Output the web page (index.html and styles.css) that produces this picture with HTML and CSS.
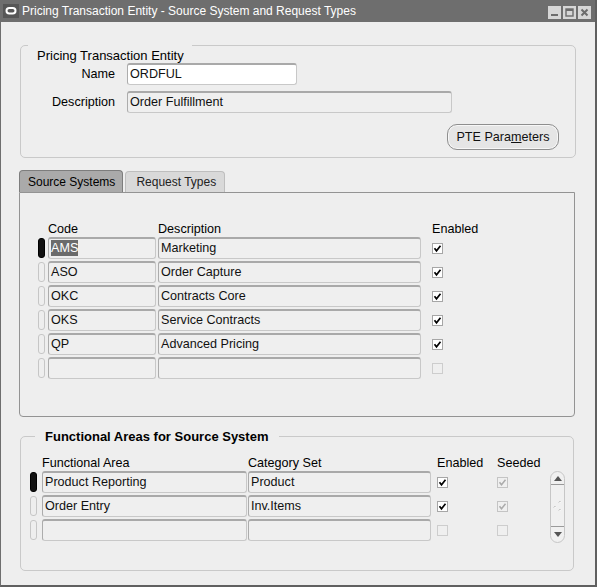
FILE: index.html
```html
<!DOCTYPE html>
<html lang="en">
<head>
  <meta charset="UTF-8">
  <title>Pricing Transaction Entity</title>
  <link rel="stylesheet" href="styles.css">
</head>
<body>

<div class="window">
  <!-- TITLE BAR -->
  <div class="titlebar">
    <svg class="app-icon" width="16" height="14" viewBox="0 0 16 14">
      <rect width="16" height="14" fill="#565656"/>
      <rect x="3.5" y="4" width="9" height="5.5" rx="2.75" fill="none" stroke="#fff" stroke-width="2"/>
    </svg>
    <span class="title">Pricing Transaction Entity - Source System and Request Types</span>
    <div class="winbtns">
      <svg width="13" height="13" viewBox="0 0 13 13">
        <rect width="13" height="13" fill="#d6d6d6"/>
        <rect x="3" y="8" width="7" height="2" fill="#6c6c6c"/>
      </svg>
      <svg width="13" height="13" viewBox="0 0 13 13">
        <rect width="13" height="13" fill="#d6d6d6"/>
        <rect x="3" y="3" width="7" height="7" fill="none" stroke="#6c6c6c" stroke-width="1.4"/>
        <rect x="3" y="3" width="7" height="2" fill="#6c6c6c"/>
      </svg>
      <svg width="13" height="13" viewBox="0 0 13 13">
        <rect width="13" height="13" fill="#d6d6d6"/>
        <path d="M3.5 3.5L9.5 9.5M9.5 3.5L3.5 9.5" stroke="#6c6c6c" stroke-width="2"/>
      </svg>
    </div>
  </div>

  <div class="content">
    <!-- PTE -->
    <div class="group pte">
      <div class="caption">Pricing Transaction Entity</div>
      <div class="form">
        <label>Name</label>
        <div class="field white name">ORDFUL</div>
        <label>Description</label>
        <div class="field desc">Order Fulfillment</div>
      </div>
      <div class="actions">
        <button class="pill">PTE Para<u>m</u>eters</button>
      </div>
    </div>

    <!-- TABS -->
    <div class="tabs">
      <div class="tab selected">Source Systems</div>
      <div class="tab">Request Types</div>
    </div>
    <div class="tabpanel">
      <div class="thead src-cols">
        <span></span><span>Code</span><span>Description</span><span>Enabled</span>
      </div>
      <div class="tbody src-cols">
        <div class="ind cur"></div>
        <div class="field code"><span class="sel">AMS</span></div>
        <div class="field sdesc">Marketing</div>
        <svg class="cb" viewBox="0 0 11 11"><rect x=".5" y=".5" width="10" height="10" fill="#fff" stroke="#a6a6a6"/><path d="M2.5 5.2l2 2.6 4-5" fill="none" stroke="#000" stroke-width="1.7"/></svg>

        <div class="ind"></div>
        <div class="field code">ASO</div>
        <div class="field sdesc">Order Capture</div>
        <svg class="cb" viewBox="0 0 11 11"><rect x=".5" y=".5" width="10" height="10" fill="#fff" stroke="#a6a6a6"/><path d="M2.5 5.2l2 2.6 4-5" fill="none" stroke="#000" stroke-width="1.7"/></svg>

        <div class="ind"></div>
        <div class="field code">OKC</div>
        <div class="field sdesc">Contracts Core</div>
        <svg class="cb" viewBox="0 0 11 11"><rect x=".5" y=".5" width="10" height="10" fill="#fff" stroke="#a6a6a6"/><path d="M2.5 5.2l2 2.6 4-5" fill="none" stroke="#000" stroke-width="1.7"/></svg>

        <div class="ind"></div>
        <div class="field code">OKS</div>
        <div class="field sdesc">Service Contracts</div>
        <svg class="cb" viewBox="0 0 11 11"><rect x=".5" y=".5" width="10" height="10" fill="#fff" stroke="#a6a6a6"/><path d="M2.5 5.2l2 2.6 4-5" fill="none" stroke="#000" stroke-width="1.7"/></svg>

        <div class="ind"></div>
        <div class="field code">QP</div>
        <div class="field sdesc">Advanced Pricing</div>
        <svg class="cb" viewBox="0 0 11 11"><rect x=".5" y=".5" width="10" height="10" fill="#fff" stroke="#a6a6a6"/><path d="M2.5 5.2l2 2.6 4-5" fill="none" stroke="#000" stroke-width="1.7"/></svg>

        <div class="ind"></div>
        <div class="field code"></div>
        <div class="field sdesc"></div>
        <svg class="cb" viewBox="0 0 11 11"><rect x=".5" y=".5" width="10" height="10" fill="#efefef" stroke="#cdcdcd"/></svg>
      </div>
    </div>

    <!-- FUNCTIONAL AREAS -->
    <div class="group func">
      <div class="legend">Functional Areas for Source System</div>
      <div class="thead fa-cols">
        <span></span><span>Functional Area</span><span>Category Set</span><span>Enabled</span><span>Seeded</span>
      </div>
      <div class="tbody fa-cols">
        <div class="vscroll">
          <div class="sc-up"><svg width="8" height="5" viewBox="0 0 8 5"><path d="M0 5L4 0L8 5Z" fill="#555"/></svg></div>
          <div class="sc-mid">
            <svg width="9" height="12" viewBox="0 0 9 12">
              <path d="M6 2.5L7.5 1M1 7.5L2.5 6M6 10.5L7.5 9" stroke="#a0a0a0" stroke-width="1"/>
              <path d="M6.5 3L8 1.5M1.5 8L3 6.5M6.5 11L8 9.5" stroke="#fff" stroke-width="1"/>
            </svg>
          </div>
          <div class="sc-down"><svg width="8" height="5" viewBox="0 0 8 5"><path d="M0 0L8 0L4 5Z" fill="#555"/></svg></div>
        </div>

        <div class="ind cur"></div>
        <div class="field farea">Product Reporting</div>
        <div class="field cset">Product</div>
        <svg class="cb" viewBox="0 0 11 11"><rect x=".5" y=".5" width="10" height="10" fill="#fff" stroke="#a6a6a6"/><path d="M2.5 5.2l2 2.6 4-5" fill="none" stroke="#000" stroke-width="1.7"/></svg>
        <svg class="cb" viewBox="0 0 11 11"><rect x=".5" y=".5" width="10" height="10" fill="#efefef" stroke="#c4c4c4"/><path d="M2.5 5.2l2 2.6 4-5" fill="none" stroke="#ababab" stroke-width="1.5"/></svg>

        <div class="ind"></div>
        <div class="field farea">Order Entry</div>
        <div class="field cset">Inv.Items</div>
        <svg class="cb" viewBox="0 0 11 11"><rect x=".5" y=".5" width="10" height="10" fill="#fff" stroke="#a6a6a6"/><path d="M2.5 5.2l2 2.6 4-5" fill="none" stroke="#000" stroke-width="1.7"/></svg>
        <svg class="cb" viewBox="0 0 11 11"><rect x=".5" y=".5" width="10" height="10" fill="#efefef" stroke="#c4c4c4"/><path d="M2.5 5.2l2 2.6 4-5" fill="none" stroke="#ababab" stroke-width="1.5"/></svg>

        <div class="ind"></div>
        <div class="field farea"></div>
        <div class="field cset"></div>
        <svg class="cb" viewBox="0 0 11 11"><rect x=".5" y=".5" width="10" height="10" fill="#efefef" stroke="#cdcdcd"/></svg>
        <svg class="cb" viewBox="0 0 11 11"><rect x=".5" y=".5" width="10" height="10" fill="#efefef" stroke="#cdcdcd"/></svg>
      </div>
    </div>
  </div>
</div>

</body>
</html>
```

FILE: styles.css
```css
* { box-sizing: border-box; }
body {
  margin: 0;
  background: #ffffff;
  font-family: "Liberation Sans", Arial, sans-serif;
  font-size: 12.6px;
  color: #000;
}

.window {
  width: 597px;
  height: 587px;
  background: #eeeeee;
  border-left: 1px solid #6e6e6e;
  border-right: 2px solid #606060;
  border-bottom: 2px solid #606060;
}

/* title bar */
.titlebar {
  height: 22px;
  background: #6e6e6e;
  color: #fff;
  font-size: 12px;
  display: flex;
  align-items: center;
}
.app-icon { margin-left: 2px; display: block; }
.title { margin-left: 3px; white-space: nowrap; }
.winbtns {
  margin-left: auto;
  margin-right: 4px;
  margin-top: 2px;
  display: flex;
  gap: 2px;
}
.winbtns svg { display: block; }

.content { padding: 23px 0 0 19px; }

/* group boxes */
.group {
  border: 1px solid #c9c9c9;
  border-radius: 5px;
}
.pte {
  width: 556px;
  padding-bottom: 7px;
}
.caption {
  width: fit-content;
  margin: -1px 0 0 7px;
  padding: 4px 8px 0 9px;
  background: #eeeeee;
  font-size: 13px;
  line-height: 14px;
}
.form {
  display: grid;
  grid-template-columns: 94px auto;
  column-gap: 12px;
  row-gap: 6px;
  align-items: center;
  justify-items: start;
}
.form label { justify-self: end; line-height: 14px; }

.field {
  height: 22px;
  padding: 0 2px;
  background: #efefef;
  border: 1px solid #c8c8c8;
  border-top: 2px solid #a9a9a9;
  border-left-color: #acacac;
  border-radius: 3px;
  line-height: 19px;
  white-space: nowrap;
  overflow: hidden;
  color: #111;
}
.field.white { background: #fff; }
.name { width: 170px; }
.desc { width: 325px; }
.sel {
  background: #6b6b6b;
  color: #fff;
  padding: 1px 0;
}

.actions {
  display: flex;
  justify-content: flex-end;
  padding-right: 16px;
  margin-top: 11px;
}
.pill {
  width: 112px;
  height: 26px;
  padding: 0;
  font: inherit;
  color: #111;
  background: #e5e5e5;
  border: 1px solid #8e8e8e;
  border-radius: 10px;
  box-shadow: inset 0 0 0 1px #f7f7f7;
}

/* tabs */
.tabs {
  display: flex;
  align-items: flex-end;
  gap: 2px;
  height: 22px;
  margin: 12px 0 0 -1px;
  font-size: 12px;
}
.tab {
  height: 21px;
  padding: 1px 8px 0 10px;
  line-height: 19px;
  background: #d9d9d9;
  border: 1px solid #bebebe;
  border-bottom: none;
  border-radius: 4px 4px 0 0;
  color: #222;
  white-space: nowrap;
}
.tab.selected {
  height: 22px;
  padding: 2px 7px 0 8px;
  background: #aaaaaa;
  border-color: #7d7d7d;
  color: #000;
}
.tabpanel {
  width: 556px;
  margin-left: -1px;
  padding: 29px 0 37px 18px;
  border: 1px solid #939393;
  border-radius: 0 0 4px 4px;
}

/* grids */
.thead, .tbody { display: grid; }
.thead {
  line-height: 14px;
  margin-bottom: 1px;
  white-space: nowrap;
}
.tbody {
  grid-auto-rows: 22px;
  row-gap: 2px;
  align-items: center;
}
.src-cols { grid-template-columns: 10px 110px 274px 11px; }
.code { width: 108px; }
.sdesc { width: 263px; }

.ind {
  width: 7px;
  height: 20px;
  background: #eeeeee;
  border: 1px solid #c6c6c6;
  border-radius: 3px;
}
.ind.cur { background: #111; border-color: #000; }

.cb { width: 11px; height: 11px; display: block; }

/* functional areas */
.func {
  width: 554px;
  margin-top: 19px;
  padding: 0 0 29px 9px;
}
.legend {
  width: fit-content;
  margin: -8px 0 11px 5px;
  padding: 0 11px 0 10px;
  background: #eeeeee;
  font-size: 13px;
  font-weight: bold;
  line-height: 16px;
}
.fa-cols { grid-template-columns: 12px 206px 189px 60px 53px 15px; }
.farea { width: 205px; }
.cset { width: 183px; }

.vscroll {
  grid-column: 6;
  grid-row: 1 / span 3;
  align-self: start;
  width: 15px;
  height: 72px;
  display: flex;
  flex-direction: column;
  background: #f0f0f0;
  border: 1px solid #c6c6c6;
  border-radius: 8px;
}
.sc-up, .sc-down {
  display: flex;
  justify-content: center;
}
.sc-up {
  height: 13px;
  padding-top: 4px;
  border-bottom: 1px solid #9a9a9a;
}
.sc-down {
  height: 16px;
  padding-top: 5px;
  border-top: 1px solid #9a9a9a;
}
.sc-mid {
  flex: 1;
  display: flex;
  align-items: center;
  justify-content: center;
}
.sc-up svg, .sc-down svg, .sc-mid svg { display: block; }
```
